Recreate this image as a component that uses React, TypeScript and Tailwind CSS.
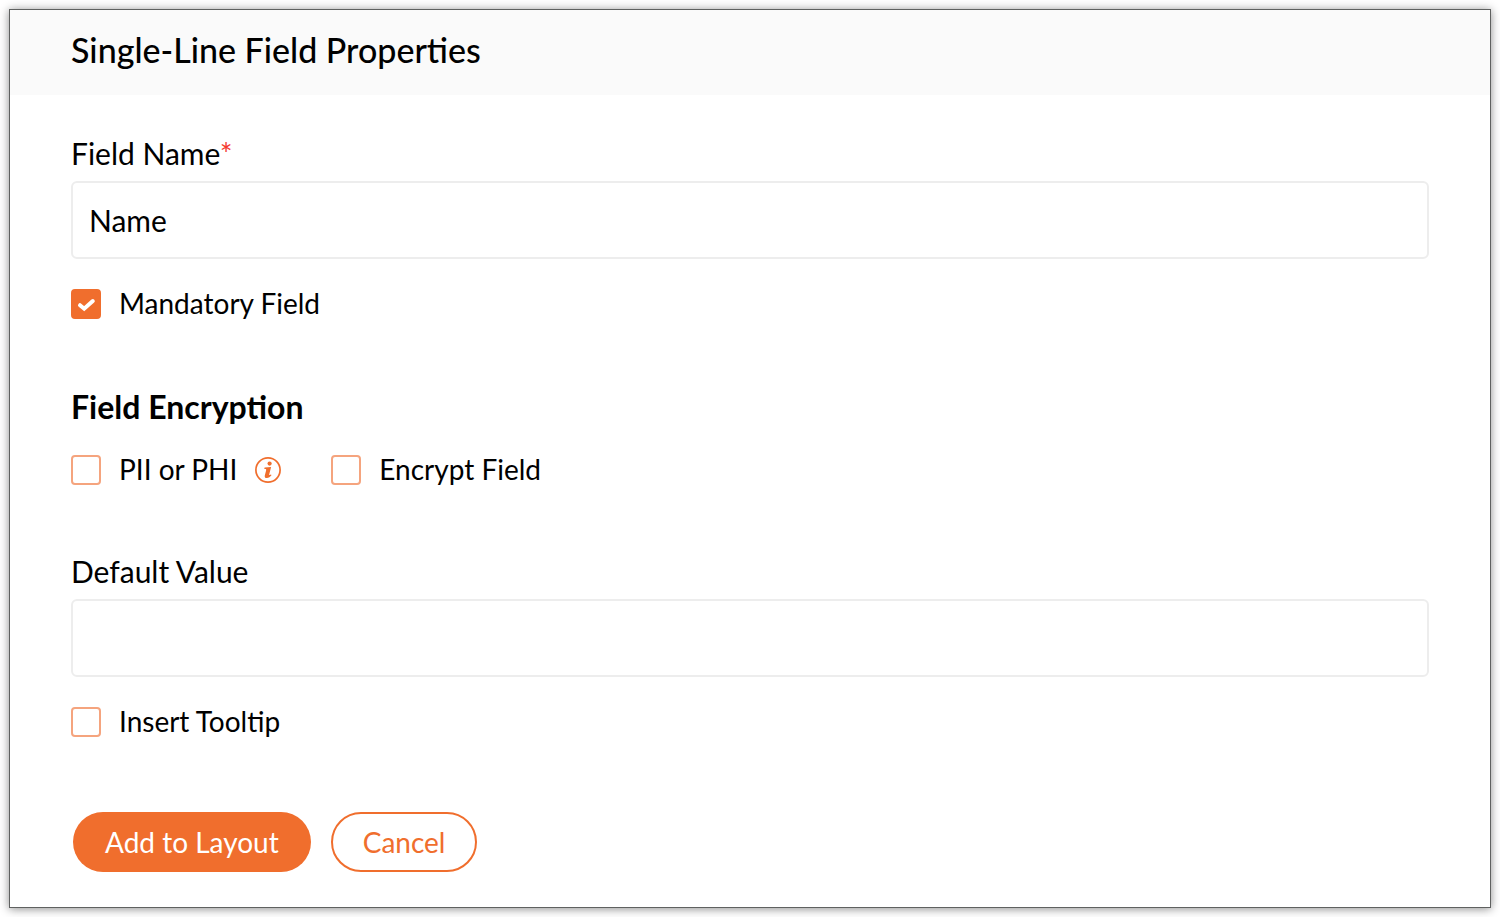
import { useId, useState } from "react";
import type { ReactNode } from "react";

function TextField({ label, required, initial = "" }: { label: string; required?: boolean; initial?: string }) {
  const id = useId();
  const [value, setValue] = useState(initial);
  return (
    <div className="flex flex-col gap-2">
      <label htmlFor={id} className="text-[30px] leading-10">
        {label}
        {required && <span className="text-[#f4392f]">*</span>}
      </label>
      <input
        id={id}
        type="text"
        value={value}
        required={required}
        onChange={(e) => setValue(e.target.value)}
        className="h-[78px] w-full rounded-md border-2 border-[#ededed] bg-white px-4 text-[30px] outline-none focus:border-[#f4a47e]"
      />
    </div>
  );
}

function CheckBox({ label, initial = false, children }: { label: string; initial?: boolean; children?: ReactNode }) {
  const id = useId();
  const [checked, setChecked] = useState(initial);
  return (
    <div className="flex h-[30px] items-center">
      <span className="relative size-[30px] shrink-0">
        <input
          id={id}
          type="checkbox"
          checked={checked}
          onChange={(e) => setChecked(e.target.checked)}
          className="block size-[30px] appearance-none rounded-[4px] border-2 border-[#f5a47e] bg-white checked:border-[#f06e2d] checked:bg-[#f06e2d]"
        />
        {checked && (
          <svg viewBox="0 0 30 30" className="pointer-events-none absolute inset-0 size-full" aria-hidden="true">
            <path d="M9 16.2 13.2 19.7 21.8 12" fill="none" stroke="#fff" strokeWidth="4" strokeLinecap="round" strokeLinejoin="miter" />
          </svg>
        )}
      </span>
      <label htmlFor={id} className="pb-[3px] pl-[18px] text-[28px] leading-[30px]">
        {label}
      </label>
      {children}
    </div>
  );
}

function InfoIcon() {
  return (
    <svg viewBox="0 0 26 26" className="size-[26px]" fill="none" aria-hidden="true">
      <circle cx="13" cy="13" r="12.1" stroke="#f06e2d" strokeWidth="1.7" />
      <circle cx="14.6" cy="6.6" r="2.1" fill="#f06e2d" />
      <path
        d="M9.6 10.4 16.1 9.9 14.2 17.5c-.2.8.4.9 1.5-.1l.9.7c-1.4 1.9-3 2.9-4.7 2.9-1.8 0-2.5-1-2.1-2.6l1.3-5c.2-.9 0-1.2-.6-1.3l-1.2-.1Z"
        fill="#f06e2d"
      />
    </svg>
  );
}

export default function App() {
  return (
    <div className="bg-white p-[9px] font-['Lato',sans-serif] text-black">
      <form
        onSubmit={(e) => e.preventDefault()}
        className="border border-[#5f6160] bg-white shadow-[0_1px_9px_rgba(0,0,0,0.45)]"
      >
        <header className="bg-[#fafafa] px-[61px] pt-[18px] pb-[23px]">
          <h1 className="text-[34px] leading-[44px] font-medium">Single-Line Field Properties</h1>
        </header>
        <div className="px-[61px] pt-[38px] pb-[35px]">
          <TextField label="Field Name" required initial="Name" />
          <div className="pt-[30px]">
            <CheckBox label="Mandatory Field" initial />
          </div>

          <h2 className="pt-[68px] text-[32px] leading-10 font-bold">Field Encryption</h2>
          <div className="flex flex-wrap gap-x-[50px] pt-7">
            <CheckBox label="PII or PHI">
              <button type="button" aria-label="About PII and PHI" className="ml-[18px]">
                <InfoIcon />
              </button>
            </CheckBox>
            <CheckBox label="Encrypt Field" />
          </div>

          <div className="pt-[66px]">
            <TextField label="Default Value" />
          </div>
          <div className="pt-[30px]">
            <CheckBox label="Insert Tooltip" />
          </div>

          <div className="flex gap-5 pt-[75px] pl-0.5">
            <button type="submit" className="h-[60px] rounded-full bg-[#f06e2d] px-8 text-[28px] text-white">
              Add to Layout
            </button>
            <button
              type="button"
              className="h-[60px] rounded-full border-2 border-[#f06e2d] bg-white px-[30px] text-[28px] text-[#f06e2d]"
            >
              Cancel
            </button>
          </div>
        </div>
      </form>
    </div>
  );
}
